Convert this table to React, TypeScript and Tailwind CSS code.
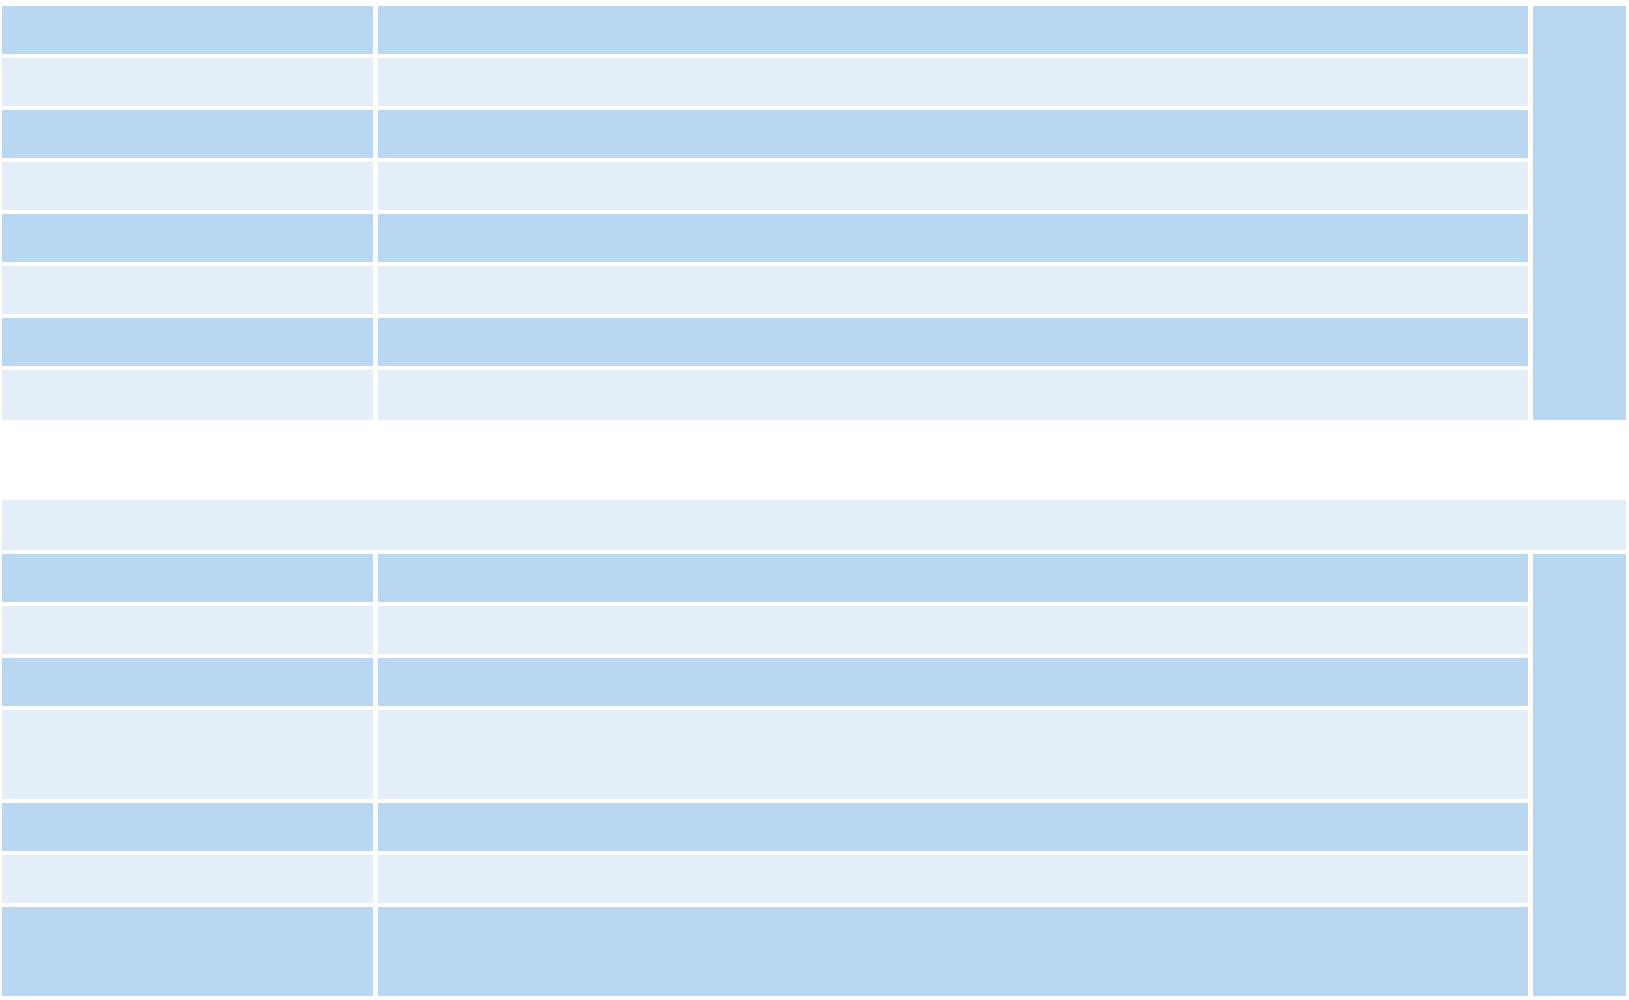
import * as React from 'react';

// two blank striped grids, right column spans all rows

const dark = 'bg-[#bad7f1]';
const light = 'bg-[#e4eef9]';

type Row = { h: string; tone: 'dark' | 'light' };

const topRows: Row[] = [
  { h: 'h-[48px]', tone: 'dark' },
  { h: 'h-[48px]', tone: 'light' },
  { h: 'h-[48px]', tone: 'dark' },
  { h: 'h-[48px]', tone: 'light' },
  { h: 'h-[48px]', tone: 'dark' },
  { h: 'h-[48px]', tone: 'light' },
  { h: 'h-[48px]', tone: 'dark' },
  { h: 'h-[50px]', tone: 'light' },
];

const bottomRows: Row[] = [
  { h: 'h-[48px]', tone: 'dark' },
  { h: 'h-[48px]', tone: 'light' },
  { h: 'h-[48px]', tone: 'dark' },
  { h: 'h-[89px]', tone: 'light' },
  { h: 'h-[48px]', tone: 'dark' },
  { h: 'h-[48px]', tone: 'light' },
  { h: 'h-[89px]', tone: 'dark' },
];

function Block({ rows, spanClass }: { rows: Row[]; spanClass: string }) {
  return (
    <div className="grid grid-cols-[371px_1fr_93px] gap-x-[5px] gap-y-[4px]">
      {rows.map((row, i) => (
        <React.Fragment key={i}>
          <div className={`${row.h} ${row.tone === 'dark' ? dark : light}`} />
          <div className={`${row.h} ${row.tone === 'dark' ? dark : light}`} />
          {i === 0 && <div className={`${spanClass} ${dark}`} />}
        </React.Fragment>
      ))}
    </div>
  );
}

export default function App() {
  return (
    <div className="w-full min-h-screen bg-white pt-[6px] pl-[2px] pr-[3px]">
      <Block rows={topRows} spanClass="row-span-8" />

      <div className="mt-[80px] flex flex-col gap-[4px]">
        <div className={`h-[50px] ${light}`} />
        <Block rows={bottomRows} spanClass="row-span-7" />
      </div>
    </div>
  );
}
